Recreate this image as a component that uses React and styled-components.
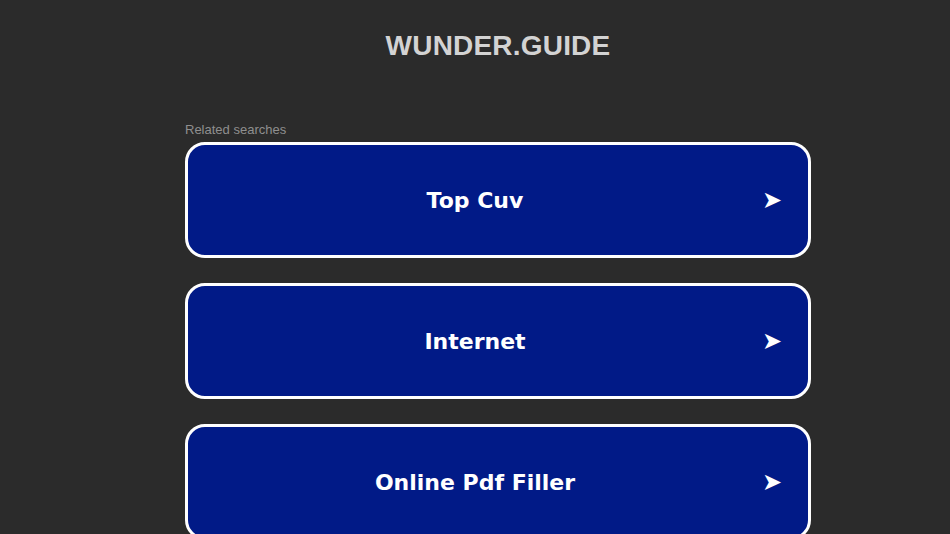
import styled, { createGlobalStyle } from 'styled-components';

const GlobalStyle = createGlobalStyle`
    html, body {
        margin: 0;
        background: #2b2b2b;
        font-family: "Liberation Sans", Arial, sans-serif;
    }
`;

const Page = styled.div`
    display: flex;
    flex-direction: column;
    align-items: center;
    padding-left: 46px;
    height: 534px;
    overflow: hidden;
`;

const Brand = styled.h1`
    margin: 31px 0 0;
    font-size: 28px;
    font-weight: bold;
    color: #d3d3d3;
    letter-spacing: 0.2px;
    line-height: 30px;
`;

const Results = styled.div`
    width: 626px;
    margin-top: 62px;
`;

const Label = styled.div`
    font-size: 13px;
    color: #8f8f8f;
    line-height: 14px;
    margin-bottom: 5px;
`;

const List = styled.div`
    display: flex;
    flex-direction: column;
    gap: 25px;
`;

const Card = styled.a`
    display: flex;
    align-items: center;
    height: 110px;
    border: 3px solid #ffffff;
    border-radius: 20px;
    background: #011a87;
    color: #ffffff;
    text-decoration: none;
    padding-right: 26px;
`;

const Title = styled.span`
    flex: 1;
    text-align: center;
    font-family: "DejaVu Sans", Verdana, sans-serif;
    font-weight: bold;
    font-size: 22px;
`;

const Arrow = styled.span`
    width: 20px;
    font-family: "DejaVu Sans", sans-serif;
    font-size: 24px;
    line-height: 1;
`;

const searches = ['Top Cuv', 'Internet', 'Online Pdf Filler'];

function App() {
    return (
        <>
            <GlobalStyle />
            <Page>
                <Brand>WUNDER.GUIDE</Brand>
                <Results>
                    <Label>Related searches</Label>
                    <List>
                        {searches.map((s) => (
                            <Card key={s} href="#">
                                <Title>{s}</Title>
                                <Arrow>➤</Arrow>
                            </Card>
                        ))}
                    </List>
                </Results>
            </Page>
        </>
    );
}

export default App;
